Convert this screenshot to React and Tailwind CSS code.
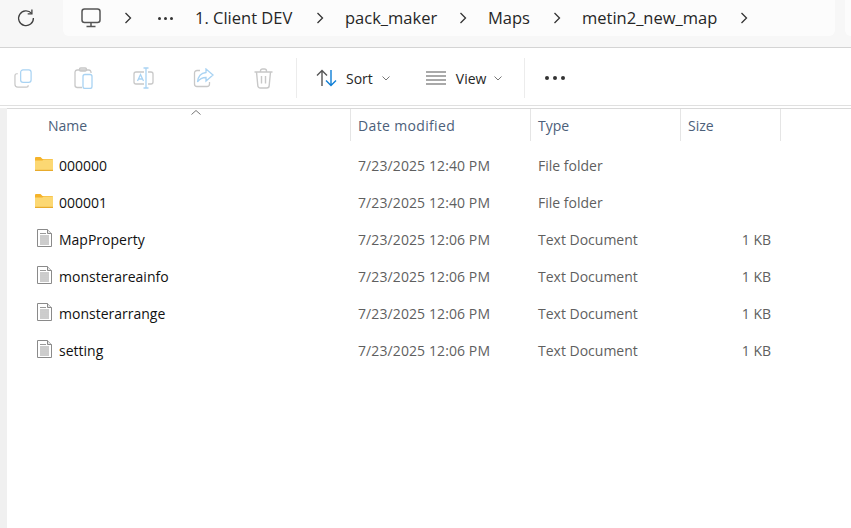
const font = { fontFamily: '"Open Sans", "Noto Sans", sans-serif' }

function Chevron() {
  return (
    <svg width="8" height="12" viewBox="0 0 8 12" fill="none" stroke="#333" strokeWidth="1.3" className="shrink-0">
      <path d="M1.5 1 L6.5 6 L1.5 11" />
    </svg>
  )
}

function Crumb({ label, width }) {
  return (
    <div className="flex items-center">
      <span className="text-[16.5px] leading-none text-[#262626] whitespace-nowrap" style={{ width }}>{label}</span>
      <div className="w-[46px] flex justify-center pr-[5px]"><Chevron /></div>
    </div>
  )
}

function AddressBar() {
  return (
    <div className="h-[48px] bg-[#f7f7f7] border-b border-[#d4d4d4] flex items-start shrink-0">
      <div className="w-[63px] h-[36px] flex items-center justify-center pr-[12px]">
        <svg width="20" height="20" viewBox="0 0 20 20" fill="none" stroke="#404040" strokeWidth="1.3">
          <path d="M15.6 5.4 A7.4 7.4 0 1 0 17.4 10" />
          <path d="M15.9 1.6 V5.8 H11.7" />
        </svg>
      </div>
      <div className="w-[772px] h-[36px] bg-[#fcfcfc] rounded-b-md flex items-center pl-[18px]">
        <svg width="20" height="20" viewBox="0 0 20 20" fill="none" stroke="#555" strokeWidth="1.5" className="shrink-0">
          <rect x="1" y="1" width="18" height="13.5" rx="2.5" />
          <path d="M10 14.5 V18 M5.5 18.6 H14.5" />
        </svg>
        <div className="w-[54px] flex justify-center"><Chevron /></div>
        <div className="w-[26px] flex justify-center gap-[3px] mr-[5px] -ml-[3px]">
          <i className="w-[3px] h-[3px] rounded-full bg-[#333]" />
          <i className="w-[3px] h-[3px] rounded-full bg-[#333]" />
          <i className="w-[3px] h-[3px] rounded-full bg-[#333]" />
        </div>
        <div className="w-[12px]" />
        <Crumb label="1. Client DEV" width={104} />
        <Crumb label="pack_maker" width={97} />
        <Crumb label="Maps" width={48} />
        <Crumb label="metin2_new_map" width={141} />
      </div>
      <div className="ml-[10px] flex-1 h-[36px] bg-[#fcfcfc] rounded-bl-md" />
    </div>
  )
}

function Tool({ children }) {
  return <div className="w-[60px] h-full flex items-center justify-center shrink-0">{children}</div>
}

function Toolbar() {
  const gray = '#c8c8c8'
  const blue = '#a9d3f3'
  return (
    <div className="h-[58px] bg-white border-b border-[#e0e0e0] flex items-center shrink-0 pt-[3px]">
      <div className="flex h-full items-center -ml-[7px]">
        <Tool>
          <svg width="19" height="19" viewBox="0 0 20 20" fill="none" strokeWidth="1.3">
            <path d="M4 5 H3 A2 2 0 0 0 1 7 V16 A3 3 0 0 0 4 19 H13 A2 2 0 0 0 15 17" stroke={gray} />
            <rect x="7" y="1" width="11" height="13" rx="2.5" stroke={blue} />
          </svg>
        </Tool>
        <Tool>
          <svg width="19" height="22" viewBox="0 0 19 22" fill="none" strokeWidth="1.3">
            <path d="M8 20.5 H3 A2.3 2.3 0 0 1 1 18 V5 A2.3 2.3 0 0 1 3 3 H15 A2.3 2.3 0 0 1 17 5 V6" stroke={gray} />
            <rect x="5.5" y="1" width="7" height="3" rx="1.2" stroke={gray} />
            <rect x="9" y="7.5" width="9" height="14" rx="2" stroke={blue} />
          </svg>
        </Tool>
        <Tool>
          <svg width="21" height="22" viewBox="0 0 21 22" fill="none" strokeWidth="1.3">
            <path d="M11 5 H3 A2 2 0 0 0 1 7 V15 A2 2 0 0 0 3 17 H11 M15 5 H18 A2 2 0 0 1 20 7 V15 A2 2 0 0 1 18 17 H15" stroke={gray} />
            <path d="M13 1 V21 M10.5 1 H15.5 M10.5 21 H15.5 M4.5 14 L7.5 7.5 L10.5 14 M5.5 12 H9.5" stroke={blue} />
          </svg>
        </Tool>
        <Tool>
          <svg width="21" height="20" viewBox="0 0 21 20" fill="none" strokeWidth="1.3">
            <path d="M7 2.5 H4 A2.5 2.5 0 0 0 1.5 5 V16 A2.5 2.5 0 0 0 4 18.5 H14 A2.5 2.5 0 0 0 16.5 16 V14" stroke={gray} />
            <path d="M13 1 L20 7 L13 13 V9.5 C9 9.5 6.5 11 4.5 14 C5 9 8 5 13 4.5 Z" stroke={blue} />
          </svg>
        </Tool>
        <Tool>
          <svg width="19" height="21" viewBox="0 0 19 21" fill="none" stroke={gray} strokeWidth="1.4">
            <path d="M0.5 4 H18.5 M6.5 4 V3 A2 2 0 0 1 8.5 1 H10.5 A2 2 0 0 1 12.5 3 V4 M2.5 4 L3.8 17.5 A2.5 2.5 0 0 0 6.3 20 H12.7 A2.5 2.5 0 0 0 15.2 17.5 L16.5 4 M7.5 8 V15.5 M11.5 8 V15.5" />
          </svg>
        </Tool>
      </div>
      <div className="w-px h-[40px] bg-[#ececec] ml-[3px]" />
      <div className="flex items-center ml-[19px]">
        <svg width="22" height="18" viewBox="0 0 22 18" fill="none" strokeWidth="1.4" className="shrink-0">
          <path d="M6 17 V1.5 M1 6.5 L6 1.5 L11 6.5" stroke="#555" />
          <path d="M15 1 V16.5 M10 11.5 L15 16.5 L20 11.5" stroke="#0f7fd6" />
        </svg>
        <span className="ml-[8px] mt-[1px] text-[14px] text-[#262626] leading-none">Sort</span>
        <svg width="8" height="5" viewBox="0 0 8 5" fill="none" stroke="#777" className="ml-[9px]"><path d="M0.5 0.5 L4 4 L7.5 0.5" /></svg>
      </div>
      <div className="flex items-center ml-[36px]">
        <svg width="20" height="14" viewBox="0 0 20 14" fill="none" stroke="#555" strokeWidth="1.2" className="shrink-0">
          <path d="M0 1 H20 M0 5 H20 M0 9 H20 M0 13 H20" />
        </svg>
        <span className="ml-[10px] mt-[1px] text-[14px] text-[#262626] leading-none">View</span>
        <svg width="8" height="5" viewBox="0 0 8 5" fill="none" stroke="#777" className="ml-[8px]"><path d="M0.5 0.5 L4 4 L7.5 0.5" /></svg>
      </div>
      <div className="w-px h-[40px] bg-[#ececec] ml-[22px]" />
      <div className="flex gap-[4px] ml-[20px]">
        <i className="w-[4px] h-[4px] rounded-full bg-[#333]" />
        <i className="w-[4px] h-[4px] rounded-full bg-[#333]" />
        <i className="w-[4px] h-[4px] rounded-full bg-[#333]" />
      </div>
    </div>
  )
}

function FolderIcon() {
  return (
    <svg width="18" height="14" viewBox="0 0 18 14" className="shrink-0">
      <path d="M0 1 A1 1 0 0 1 1 0 H5.5 L7.5 2 H17 A1 1 0 0 1 18 3 V5 H0 Z" fill="#f5b32a" />
      <path d="M0 3.5 H7.5 L8.5 2.5 H18 V13 A1 1 0 0 1 17 14 H1 A1 1 0 0 1 0 13 Z" fill="#fcd873" />
      <rect x="0" y="12.8" width="18" height="1.2" fill="#e8ab2c" />
    </svg>
  )
}

function FileIcon() {
  return (
    <svg width="15" height="18" viewBox="0 0 15 18" fill="none" className="shrink-0">
      <path d="M0.5 0.5 H10.5 L14.5 4.5 V17.5 H0.5 Z" fill="#fff" stroke="#8a8a8a" />
      <path d="M10.5 0.5 V4.5 H14.5" fill="#e5e5e5" stroke="#8a8a8a" />
      <path d="M3 4.5 H9 M3 7 H12 M3 9 H12 M3 11 H12 M3 13 H12 M3 15 H12" stroke="#9a9a9a" />
    </svg>
  )
}

const rows = [
  { name: '000000', date: '7/23/2025 12:40 PM', type: 'File folder', size: '', folder: true },
  { name: '000001', date: '7/23/2025 12:40 PM', type: 'File folder', size: '', folder: true },
  { name: 'MapProperty', date: '7/23/2025 12:06 PM', type: 'Text Document', size: '1 KB' },
  { name: 'monsterareainfo', date: '7/23/2025 12:06 PM', type: 'Text Document', size: '1 KB' },
  { name: 'monsterarrange', date: '7/23/2025 12:06 PM', type: 'Text Document', size: '1 KB' },
  { name: 'setting', date: '7/23/2025 12:06 PM', type: 'Text Document', size: '1 KB' },
]

const cols = 'grid grid-cols-[344px_180px_150px_100px]'

function Header() {
  return (
    <div className={`${cols} h-[32px] relative text-[14px] text-[#4c607a]`}>
      <div className="border-r border-[#e5e5e5] pl-[41px] flex items-center">Name</div>
      <div className="border-r border-[#e5e5e5] pl-[7px] flex items-center tracking-[0.35px]">Date modified</div>
      <div className="border-r border-[#e5e5e5] pl-[7px] flex items-center">Type</div>
      <div className="border-r border-[#e5e5e5] pl-[7px] flex items-center">Size</div>
      <svg width="10" height="5" viewBox="0 0 10 5" fill="none" stroke="#777" className="absolute left-[184px] top-[1px]"><path d="M0.5 4.5 L5 0.5 L9.5 4.5" /></svg>
    </div>
  )
}

function Row({ row }) {
  return (
    <div className={`${cols} h-[37px] items-center text-[14px]`}>
      <div className="flex items-center text-[#111]">
        {row.folder
          ? <div className="w-[52px] pl-[28px] -mt-[3px]"><FolderIcon /></div>
          : <div className="w-[52px] pl-[30px] -mt-[3px]"><FileIcon /></div>}
        <span className="-ml-[1px] pl-[1px]">{row.name}</span>
      </div>
      <div className="pl-[7px] text-[#5f5f5f] tracking-[0.1px]">{row.date}</div>
      <div className="pl-[7px] text-[#5f5f5f]">{row.type}</div>
      <div className="pr-[10px] text-right text-[#5f5f5f]">{row.size}</div>
    </div>
  )
}

export default function App() {
  return (
    <div className="w-[851px] h-[528px] flex flex-col bg-white overflow-hidden" style={font}>
      <AddressBar />
      <Toolbar />
      <div className="flex flex-1 min-h-0 pt-[2px] bg-white">
        <div className="w-[7px] bg-[#f0f0f0] h-full shrink-0" />
        <div className="flex-1 border-t border-[#d9d9d9]">
          <Header />
          <div className="pt-[6px]">
            {rows.map(r => <Row key={r.name} row={r} />)}
          </div>
        </div>
      </div>
    </div>
  )
}
